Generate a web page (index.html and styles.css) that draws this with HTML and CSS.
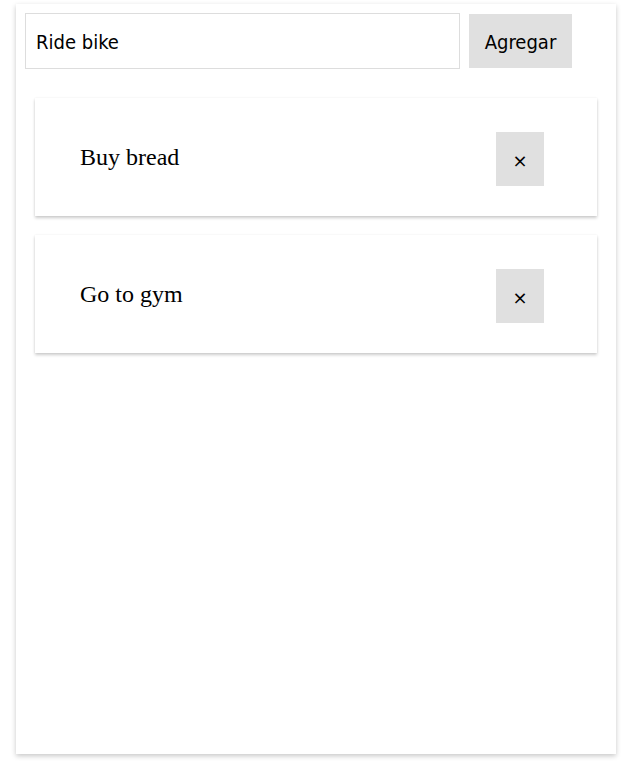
FILE: index.html
```html
<!DOCTYPE html>
<html>
<head>
<meta charset="utf-8">
<link rel="stylesheet" href="styles.css">
</head>
<body>
<div class="app">
  <form class="add-row">
    <input class="task-input" type="text" value="Ride bike">
    <button class="add-btn" type="button">Agregar</button>
  </form>
  <ul class="list">
    <li class="card">
      <span class="card-text">Buy bread</span>
      <button class="del-btn" type="button">×</button>
    </li>
    <li class="card">
      <span class="card-text">Go to gym</span>
      <button class="del-btn" type="button">×</button>
    </li>
  </ul>
</div>
</body>
</html>
```
FILE: styles.css
```css
html, body {
  margin: 0;
  padding: 0;
  background: #fff;
}
body {
  padding: 4px 0 20px;
}
.app {
  box-sizing: border-box;
  width: 600px;
  height: 750px;
  margin: 0 0 0 16px;
  padding: 9px;
  background: #fff;
  box-shadow: 0 2px 5px rgba(0, 0, 0, 0.22);
}
.add-row {
  display: flex;
  align-items: center;
  gap: 9px;
  margin: 0;
}
.task-input {
  box-sizing: border-box;
  width: 435px;
  height: 56px;
  border: 1px solid #ddd;
  padding: 2px 10px 0;
  font-family: "DejaVu Sans Condensed", "DejaVu Sans", sans-serif;
  font-size: 20px;
  color: #000;
  outline: none;
}
.add-btn {
  box-sizing: border-box;
  width: 103px;
  height: 54px;
  border: none;
  background: #e0e0e0;
  font-family: "DejaVu Sans Condensed", "DejaVu Sans", sans-serif;
  font-size: 20px;
  color: #000;
  padding: 2px 0 0;
}
.list {
  list-style: none;
  margin: 29px 10px 0;
  padding: 0;
  display: flex;
  flex-direction: column;
  gap: 19px;
}
.card {
  box-sizing: border-box;
  height: 118px;
  display: flex;
  align-items: center;
  justify-content: space-between;
  padding: 0 53px 0 45px;
  background: #fff;
  box-shadow: 0 2px 3px rgba(0, 0, 0, 0.2), 0 0 2px rgba(0, 0, 0, 0.06);
}
.card-text {
  font-family: "Liberation Serif", serif;
  font-size: 24px;
  color: #000;
}
.del-btn {
  width: 48px;
  height: 54px;
  margin-top: 4px;
  border: none;
  background: #e0e0e0;
  font-family: "DejaVu Sans", sans-serif;
  font-size: 18px;
  color: #000;
  padding: 2px 0 0;
}
```
